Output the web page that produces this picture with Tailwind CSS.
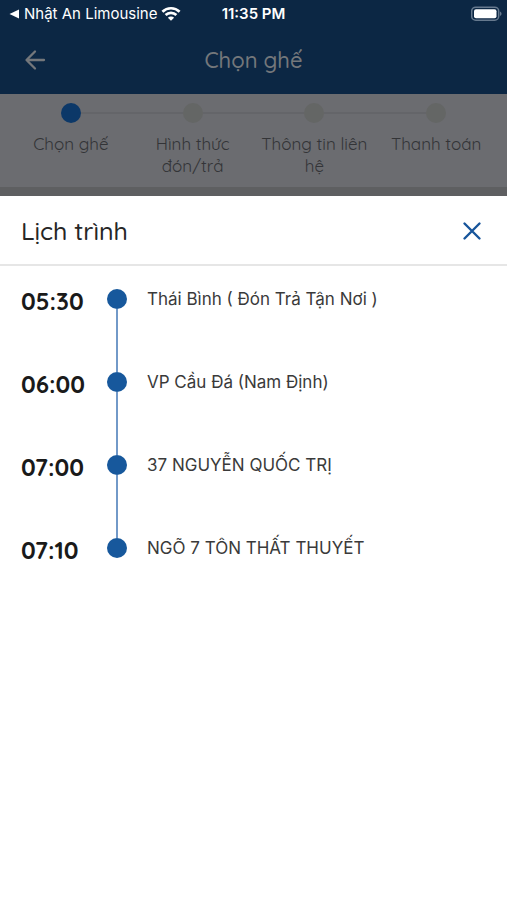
<!DOCTYPE html>
<html lang="vi">
<head>
<meta charset="utf-8">
<meta name="viewport" content="width=device-width, initial-scale=1">
<title>Chọn ghế</title>
<script src="https://cdn.jsdelivr.net/npm/@tailwindcss/browser@4"></script>
</head>
<body class="min-h-screen flex flex-col bg-white font-['Quicksand','Lato','Open_Sans',sans-serif] text-[#262626]">
<header class="bg-[#0c2744]">
  <div class="grid grid-cols-[1fr_auto_1fr] items-center h-7 pl-2 pr-2 text-white font-['Inter',sans-serif] text-[15px]">
    <a href="#" class="flex items-center gap-1 whitespace-nowrap">
      <svg class="w-3 h-3" viewBox="0 0 12 12" fill="currentColor" aria-hidden="true"><path d="M1.500 6 11 1.500v9z"/></svg>
      <span>Nhật An Limousine</span>
      <svg class="w-5 h-4" viewBox="0 0 20 16" fill="none" stroke="currentColor" stroke-width="2.700" aria-hidden="true"><path d="M1.400 5.700a12.400 12.400 0 0 1 17.200 0M4.600 9a7.800 7.800 0 0 1 10.800 0"/><path d="M10 14.800 6.900 11.700a4.400 4.400 0 0 1 6.200 0z" fill="currentColor" stroke="none"/></svg>
    </a>
    <span class="font-semibold">11:35 PM</span>
    <svg class="justify-self-end w-8 h-4 -mr-1" viewBox="0 0 32 16" role="img" aria-label="Pin"><rect x=".7" y="1.200" width="27" height="13" rx="4" fill="none" stroke="#66798e" stroke-width="1.500"/><rect x="3" y="3.200" width="22.500" height="9" rx="2" fill="#fff"/><path d="M29 5.500c2 .8 2 3.700 0 4.500z" fill="#66798e"/></svg>
  </div>
  <div class="grid grid-cols-[1fr_auto_1fr] items-center h-[66px] px-6 pb-[2px] text-[#74777b]">
    <button type="button" aria-label="Quay lại" class="justify-self-start w-6 h-6">
      <svg class="w-6 h-6" viewBox="0 0 24 24" fill="none" stroke="currentColor" stroke-width="2.300" stroke-linecap="round" stroke-linejoin="round"><path d="M20 12H3M11 3.500 2.500 12l8.500 8.500"/></svg>
    </button>
    <h1 class="text-[22px] leading-7 font-medium">Chọn ghế</h1>
  </div>
</header>
<nav aria-label="Các bước" class="bg-[#6b6c70] border-b-[9px] border-[#5e5f61] px-[10px] pt-[9px] pb-[10px]">
  <ol class="grid grid-cols-4 text-center text-[17px] leading-[22px] text-[#333437]">
    <li aria-current="step"><div class="grid grid-cols-[1fr_20px_1fr] items-center mb-[10px]"><i></i><i class="h-5 rounded-full bg-[#0c3868]"></i><i class="h-[2px] bg-[#646569]"></i></div>Chọn ghế</li>
    <li><div class="grid grid-cols-[1fr_20px_1fr] items-center mb-[10px]"><i class="h-[2px] bg-[#646569]"></i><i class="h-5 rounded-full bg-[#646665]"></i><i class="h-[2px] bg-[#646569]"></i></div>Hình thức<br>đón/trả</li>
    <li><div class="grid grid-cols-[1fr_20px_1fr] items-center mb-[10px]"><i class="h-[2px] bg-[#646569]"></i><i class="h-5 rounded-full bg-[#646665]"></i><i class="h-[2px] bg-[#646569]"></i></div>Thông tin liên<br>hệ</li>
    <li><div class="grid grid-cols-[1fr_20px_1fr] items-center mb-[10px]"><i class="h-[2px] bg-[#646569]"></i><i class="h-5 rounded-full bg-[#646665]"></i><i></i></div>Thanh toán</li>
  </ol>
</nav>
<main class="flex-1 bg-white">
  <div class="flex items-center justify-between h-[70px] px-[21px] pt-[2px] border-b-2 border-[#e6e6e6]">
    <h2 class="text-[25px] font-medium">Lịch trình</h2>
    <button type="button" aria-label="Đóng" class="w-7 h-7 text-[#17559b]">
      <svg class="w-7 h-7" viewBox="0 0 28 28" fill="none" stroke="currentColor" stroke-width="2.400" stroke-linecap="round"><path d="m6.500 6.500 15 15M21.500 6.500l-15 15"/></svg>
    </button>
  </div>
  <ol class="px-[21px] pt-[23px]">
    <li class="grid grid-cols-[86px_20px_1fr] h-[83px]">
      <time class="text-2xl leading-6 font-bold text-[#1a1a1a]">05:30</time>
      <div class="flex flex-col items-center"><i class="w-5 h-5 rounded-full bg-[#17589c]"></i><i class="flex-1 w-[2px] bg-[#7299c8]"></i></div>
      <span class="pl-5 font-['Inter',sans-serif] text-[17px] leading-5 text-[#3a3a3a]">Thái Bình ( Đón Trả Tận Nơi )</span>
    </li>
    <li class="grid grid-cols-[86px_20px_1fr] h-[83px]">
      <time class="text-2xl leading-6 font-bold text-[#1a1a1a]">06:00</time>
      <div class="flex flex-col items-center"><i class="w-5 h-5 rounded-full bg-[#17589c]"></i><i class="flex-1 w-[2px] bg-[#7299c8]"></i></div>
      <span class="pl-5 font-['Inter',sans-serif] text-[17px] leading-5 text-[#3a3a3a]">VP Cầu Đá (Nam Định)</span>
    </li>
    <li class="grid grid-cols-[86px_20px_1fr] h-[83px]">
      <time class="text-2xl leading-6 font-bold text-[#1a1a1a]">07:00</time>
      <div class="flex flex-col items-center"><i class="w-5 h-5 rounded-full bg-[#17589c]"></i><i class="flex-1 w-[2px] bg-[#7299c8]"></i></div>
      <span class="pl-5 font-['Inter',sans-serif] text-[17px] leading-5 text-[#3a3a3a]">37 NGUYỄN QUỐC TRỊ</span>
    </li>
    <li class="grid grid-cols-[86px_20px_1fr] h-[83px]">
      <time class="text-2xl leading-6 font-bold text-[#1a1a1a]">07:10</time>
      <div class="flex flex-col items-center"><i class="w-5 h-5 rounded-full bg-[#17589c]"></i></div>
      <span class="pl-5 font-['Inter',sans-serif] text-[17px] leading-5 text-[#3a3a3a]">NGÕ 7 TÔN THẤT THUYẾT</span>
    </li>
  </ol>
</main>
</body>
</html>
